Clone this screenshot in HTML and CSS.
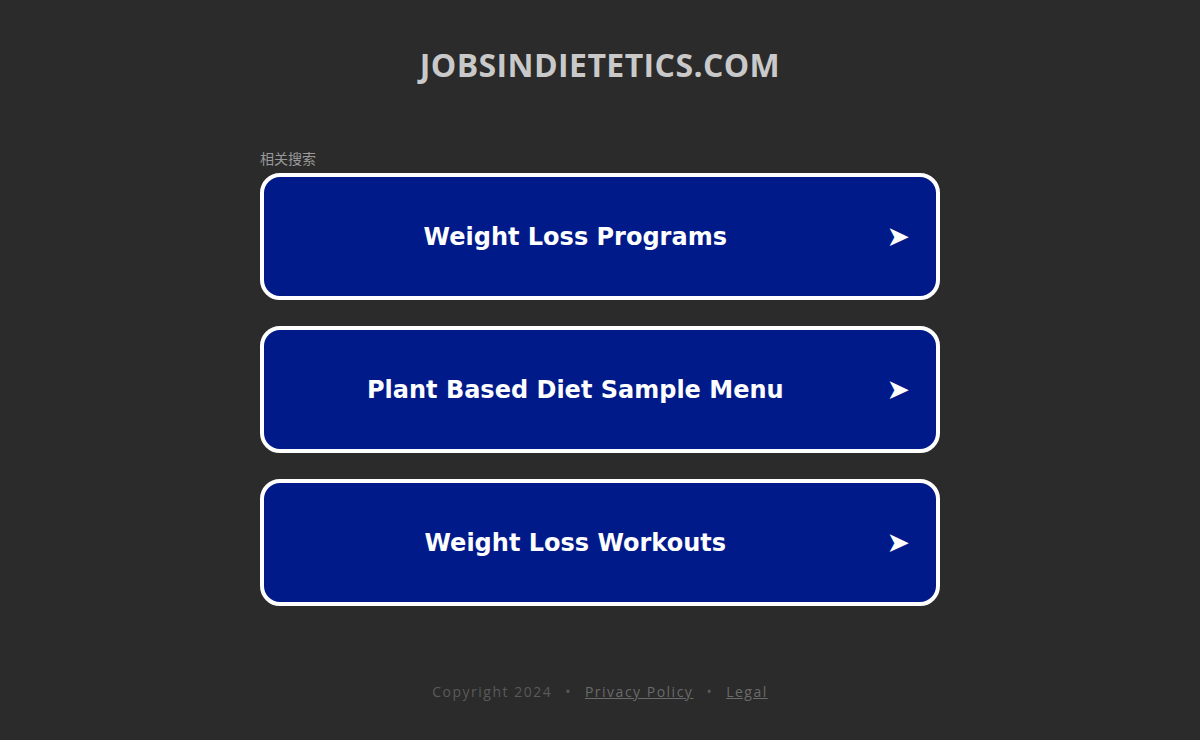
FILE: index.html
```html
<!DOCTYPE html>
<html>
<head>
<meta charset="utf-8">
<link rel="stylesheet" href="styles.css">
</head>
<body>
<div class="page">
  <h1 class="title">JOBSINDIETETICS.COM</h1>
  <div class="related">
    <div class="label">相关搜索</div>
    <a class="btn" href="#"><span class="btn-text">Weight Loss Programs</span><span class="arrow">➤</span></a>
    <a class="btn" href="#"><span class="btn-text">Plant Based Diet Sample Menu</span><span class="arrow">➤</span></a>
    <a class="btn" href="#"><span class="btn-text">Weight Loss Workouts</span><span class="arrow">➤</span></a>
  </div>
  <div class="footer">
    <span>Copyright 2024</span><span class="dot">•</span><a href="#">Privacy Policy</a><span class="dot">•</span><a href="#">Legal</a>
  </div>
</div>
</body>
</html>
```
FILE: styles.css
```css
html, body {
  margin: 0;
  padding: 0;
  background: #2b2b2b;
}
.page {
  width: 1200px;
  height: 740px;
  display: flex;
  flex-direction: column;
  align-items: center;
}
.title {
  margin: 45px 0 0;
  font-family: "Open Sans", sans-serif;
  font-weight: 700;
  font-size: 32px;
  line-height: 40px;
  color: #c9c9c9;
  letter-spacing: 0.4px;
}
.related {
  width: 680px;
  margin-top: 64px;
  display: flex;
  flex-direction: column;
}
.label {
  font-family: "Noto Sans CJK SC", sans-serif;
  font-size: 14px;
  line-height: 18px;
  color: #999;
  margin-bottom: 6px;
}
.btn {
  box-sizing: border-box;
  height: 127px;
  border: 4px solid #fff;
  border-radius: 20px;
  background: #011a8a;
  display: flex;
  align-items: center;
  text-decoration: none;
  color: #fff;
  margin-bottom: 26px;
  padding-right: 26px;
}
.btn-text {
  flex: 1;
  text-align: center;
  font-family: "DejaVu Sans", Verdana, sans-serif;
  font-weight: 700;
  font-size: 24px;
}
.arrow {
  font-family: "DejaVu Sans", sans-serif;
  font-size: 28px;
  line-height: 28px;
}
.footer {
  margin-top: 50px;
  font-family: "Open Sans", sans-serif;
  font-size: 14px;
  color: #5a5a5a;
  letter-spacing: 1.5px;
}
.footer a {
  color: #6a6a6a;
}
.dot {
  margin: 0 13px;
}
```
